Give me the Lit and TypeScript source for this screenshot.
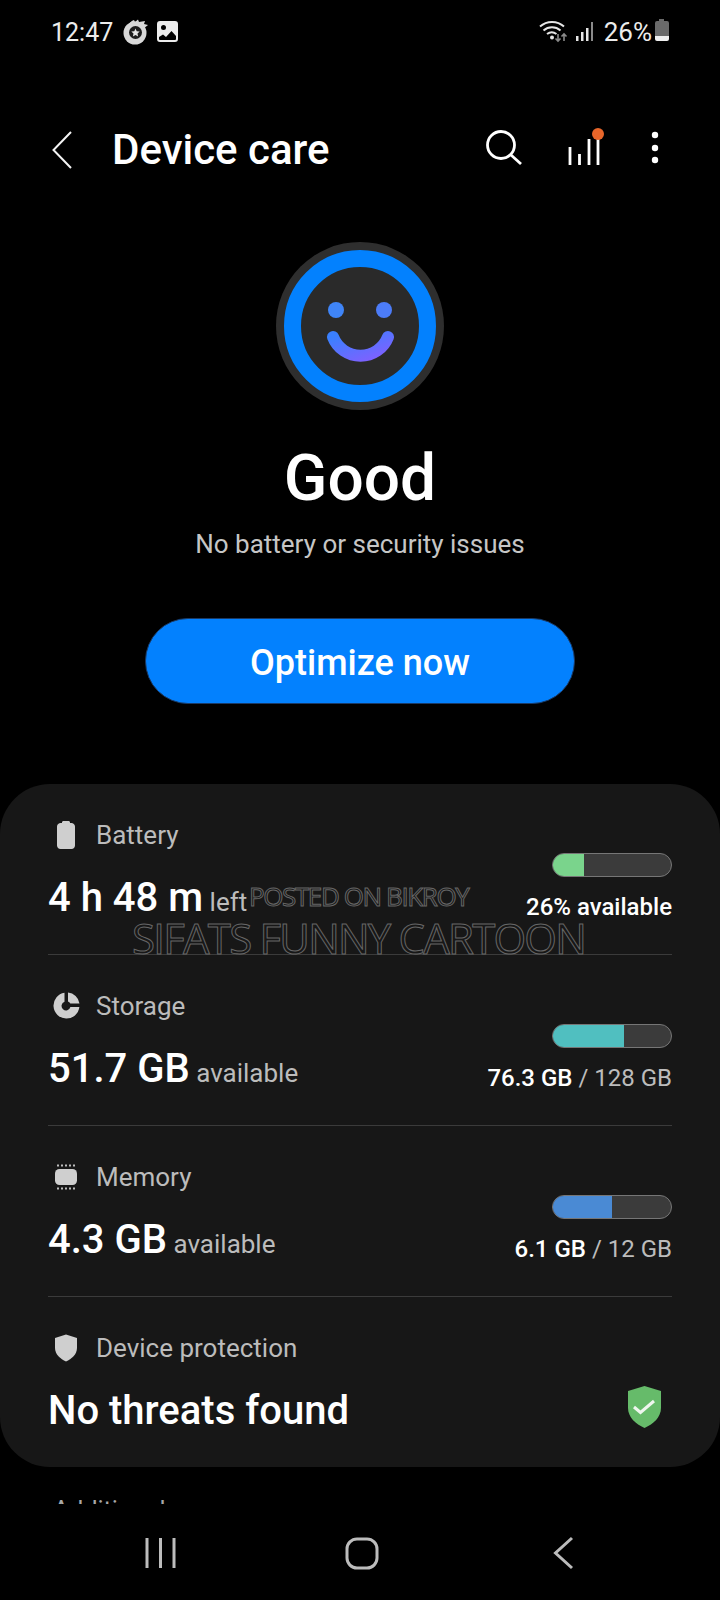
import { LitElement, html, css, svg } from 'lit';
import { customElement } from 'lit/decorators.js';

const rows = [
  {
    label: 'Battery', icon: 'battery', value: '4 h 48 m', unit: 'left',
    pct: 26, color: '#7ad48c', strong: '26% available', rest: '',
  },
  {
    label: 'Storage', icon: 'storage', value: '51.7 GB', unit: 'available',
    pct: 60, color: '#50bfc0', strong: '76.3 GB', rest: ' / 128 GB',
  },
  {
    label: 'Memory', icon: 'memory', value: '4.3 GB', unit: 'available',
    pct: 50, color: '#4a8ad4', strong: '6.1 GB', rest: ' / 12 GB',
  },
];

const rowIcons: Record<string, unknown> = {
  battery: svg`<path d="M10 3.500C10 2.700 10.600 2 11.500 2h5c.9 0 1.500.7 1.500 1.500V4h1.500C21 4 23 5.500 23 7.500v19c0 1.800-1.500 3.500-3.500 3.500h-11C6.500 30 5 28.300 5 26.500v-19C5 5.500 7 4 8.500 4H10z" fill="#cfcfcf"/>`,
  storage: svg`<path d="M12.500 2.700v9a4.500 4.500 0 1 0 5.900 5.400h9A13 13 0 1 1 12.500 2.700z" fill="#cfcfcf"/><path d="M16 2.600A13 13 0 0 1 27.500 13.500H18.300A4.500 4.500 0 0 0 16 11.400z" fill="#cfcfcf"/>`,
  memory: svg`<rect x="3" y="8" width="22" height="16" rx="4.500" fill="#cfcfcf"/><path d="M6 3.500v2M10 3.500v2M14 3.500v2M18 3.500v2M22 3.500v2M6 26.500v2M10 26.500v2M14 26.500v2M18 26.500v2M22 26.500v2" stroke="#cfcfcf" stroke-width="1.800"/>`,
  shield: svg`<path d="M14 2.500 25 6v10c0 6.500-5.500 11-11 13.500C8.500 27 3 22.500 3 16V6z" fill="#cfcfcf"/>`,
};

@customElement('app-root')
export class AppRoot extends LitElement {
  static styles = css`
    :host {
      display: block;
      width: 720px;
      height: 1600px;
      overflow: hidden;
      background: #000;
      font-family: Roboto, "Liberation Sans", sans-serif;
      color: #fff;
    }
    svg { display: block; }

    .status {
      height: 64px;
      padding: 20px 50px 0 51px;
      box-sizing: border-box;
      display: flex;
      align-items: flex-start;
      font-size: 25px;
      line-height: 25px;
      color: #ececec;
    }
    .status .shot { margin: -1px 0 0 9px; }
    .status .pic { margin: 1px 0 0 7px; }
    .status .spacer { flex: 1; }
    .status .signal { margin-top: -1px; }
    .status .level { margin-left: 10px; font-size: 26px; }
    .status .charge { margin: -1px 0 0 2px; }

    .appbar {
      height: 172px;
      display: flex;
      align-items: center;
      padding: 0 60px 0 52px;
    }
    .appbar h1 {
      margin: 0 0 0 40px;
      font-size: 42px;
      font-weight: 500;
      line-height: 50px;
      flex: 1;
    }

    .hero {
      display: flex;
      flex-direction: column;
      align-items: center;
    }
    .face { margin-top: 6px; }
    .hero h2 {
      margin: 31px 0 0;
      font-size: 64px;
      font-weight: 500;
      line-height: 75px;
    }
    .hero p {
      margin: 13px 0 0;
      font-size: 26px;
      line-height: 30px;
      color: #c6c6c6;
    }
    .optimize {
      margin-top: 59px;
      width: 430px;
      height: 86px;
      box-sizing: border-box;
      padding: 4px 0 0;
      border: 1.500px solid #1a3a66;
      border-radius: 43px;
      background: #0381fe;
      color: #fff;
      font: 500 36px Roboto, "Liberation Sans", sans-serif;
    }

    .card {
      position: relative;
      margin-top: 80px;
      height: 683px;
      background: #171717;
      border-radius: 50px;
    }
    .row {
      height: 171px;
      box-sizing: border-box;
      margin: 0 48px;
      display: flex;
      justify-content: space-between;
      border-bottom: 1px solid #3b3b3b;
    }
    .row:last-of-type { border-bottom: 0; height: 170px; }
    .left { padding-top: 33px; }
    .label {
      display: flex;
      align-items: center;
      height: 36px;
      margin-left: 4px;
      gap: 14px;
      font-size: 26px;
      color: #bcbcbc;
    }
    .reading {
      margin-top: 21px;
      font-size: 40px;
      font-weight: 500;
      line-height: 48px;
      white-space: nowrap;
    }
    .reading span {
      font-size: 26px;
      font-weight: 400;
      color: #bcbcbc;
    }
    .right {
      padding-top: 69px;
      display: flex;
      flex-direction: column;
      align-items: flex-end;
    }
    .bar {
      width: 120px;
      height: 24px;
      box-sizing: border-box;
      border: 1px solid #767676;
      border-radius: 12px;
      background: #3b3b3b;
      overflow: hidden;
    }
    .bar div { height: 100%; }
    .usage {
      margin-top: 16px;
      font-size: 24px;
      line-height: 28px;
      color: #bcbcbc;
    }
    .usage b { font-weight: 500; color: #fff; }

    .ok { margin-top: 89px; margin-right: 10px; }

    .wm {
      position: absolute;
      white-space: nowrap;
      color: transparent;
      -webkit-text-stroke: 1px #666;
      font-family: "Open Sans", sans-serif;
      line-height: 1;
    }
    .wm.small { left: 249px; top: 99px; font-size: 26px; letter-spacing: -1.400px; }
    .wm.big { left: 132px; top: 133px; font-size: 42px; letter-spacing: -1.800px; }

    .next {
      margin-top: 31px;
      height: 6px;
      padding-left: 53px;
      overflow: hidden;
      font-size: 25px;
      line-height: 25px;
      color: #a8a8a8;
    }
    .nav {
      position: relative;
      height: 96px;
    }
    .nav svg { position: absolute; left: 0; top: 0; }
  `;

  render() {
    return html`
      <div class="status">
        <span class="time">12:47</span>
        <svg class="shot" width="28" height="26" viewBox="0 0 28 26">
          <path d="M5 9C6 5 9 2 12 1l1 2 3-2.500 1 2.500 6-1-1 3 4 1-5 4z" fill="#d8d8d8"/>
          <circle cx="13" cy="14" r="11.500" fill="#d8d8d8"/>
          <circle cx="13.500" cy="13.500" r="6.500" fill="#1c1c1c"/>
          <path d="m13.500 9.500 1.200 2.800 3 .3-2.200 2 .6 3-2.600-1.500-2.600 1.500.6-3-2.200-2 3-.3z" fill="#e6e6e6"/>
        </svg>
        <svg class="pic" width="21" height="21" viewBox="0 0 21 21">
          <path fill-rule="evenodd" d="M3 0h15a3 3 0 0 1 3 3v15a3 3 0 0 1-3 3H3a3 3 0 0 1-3-3V3a3 3 0 0 1 3-3zM2 16v2a1 1 0 0 0 1 1h15a1 1 0 0 0 1-1v-3l-4.500-5L9 16l-3-2.500zM6.500 4a2.500 2.500 0 1 0 0 5 2.500 2.500 0 0 0 0-5z" fill="#ececec"/>
        </svg>
        <span class="spacer"></span>
        <svg class="signal" width="55" height="24" viewBox="0 0 55 24">
          <g fill="none" stroke="#e6e6e6" stroke-width="2">
            <path d="M1 7.500a18 18 0 0 1 24 0"/>
            <path d="M4.500 11.500a13 13 0 0 1 17 0"/>
            <path d="M8 15a8 8 0 0 1 9.500 0"/>
          </g>
          <circle cx="13" cy="18.500" r="2" fill="#e6e6e6"/>
          <path d="M19 15v7m-2.500-2.500L19 22l2.500-2.500M25 22v-7m-2.500 2.500L25 15l2.500 2.500" fill="none" stroke="#8a8a8a" stroke-width="1.600"/>
          <path d="M37 17h2.500v5H37zM42 13h2.500v9H42zM47 9h2.500v13H47z" fill="#e6e6e6"/>
          <path d="M52 3h2v19h-2z" fill="#8a8a8a"/>
        </svg>
        <span class="level">26%</span>
        <svg class="charge" width="16" height="22" viewBox="0 0 16 22">
          <path d="M5 0h5v2h3a2 2 0 0 1 2 2v13H1V4a2 2 0 0 1 2-2h2z" fill="#6a6a6a"/>
          <path d="M1 17h14v3a2 2 0 0 1-2 2H3a2 2 0 0 1-2-2z" fill="#f0f0f0"/>
        </svg>
      </div>

      <div class="appbar">
        <svg width="20" height="38" viewBox="0 0 20 38">
          <path d="M19 1 1.500 19 19 37" fill="none" stroke="#f4f4f4" stroke-width="2"/>
        </svg>
        <h1>Device care</h1>
        <svg width="180" height="50" viewBox="0 0 180 50">
          <circle cx="21" cy="20" r="13.500" fill="none" stroke="#fff" stroke-width="2.800"/>
          <path d="m31 30 10 9" stroke="#fff" stroke-width="2.800"/>
          <path d="M90 40V22M99.500 40V29M109 40V14M118 40V14" stroke="#fff" stroke-width="2.800"/>
          <circle cx="118" cy="9" r="6" fill="#e8662a"/>
          <circle cx="175" cy="10" r="3.200" fill="#fff"/>
          <circle cx="175" cy="23" r="3.200" fill="#fff"/>
          <circle cx="175" cy="35" r="3.200" fill="#fff"/>
        </svg>
      </div>

      <div class="hero">
        <svg class="face" width="168" height="168" viewBox="0 0 168 168">
          <defs>
            <linearGradient id="smile" x1="0" y1="0" x2="1" y2="1">
              <stop offset="0" stop-color="#3a80ff"/>
              <stop offset="1" stop-color="#8060ff"/>
            </linearGradient>
          </defs>
          <circle cx="84" cy="84" r="84" fill="#2e2e2e"/>
          <circle cx="84" cy="84" r="67.500" fill="#2a2a2a" stroke="#0381fe" stroke-width="17"/>
          <circle cx="60" cy="68" r="8" fill="#3f85f8"/>
          <circle cx="108" cy="68" r="8" fill="#4c7cf8"/>
          <path d="M57 95a29.500 29.500 0 0 0 55 0" fill="none" stroke="url(#smile)" stroke-width="12" stroke-linecap="round"/>
        </svg>
        <h2>Good</h2>
        <p>No battery or security issues</p>
        <button class="optimize">Optimize now</button>
      </div>

      <div class="card">
        ${rows.map((r) => html`
          <div class="row">
            <div class="left">
              <div class="label">
                <svg width="30" height="32" viewBox="0 0 30 32">${rowIcons[r.icon]}</svg>
                ${r.label}
              </div>
              <div class="reading">${r.value}<span> ${r.unit}</span></div>
            </div>
            <div class="right">
              <div class="bar"><div style="width:${r.pct}%;background:${r.color}"></div></div>
              <div class="usage"><b>${r.strong}</b>${r.rest}</div>
            </div>
          </div>
        `)}
        <div class="row">
          <div class="left">
            <div class="label">
              <svg width="30" height="32" viewBox="0 0 30 32">${rowIcons.shield}</svg>
              Device protection
            </div>
            <div class="reading">No threats found</div>
          </div>
          <svg class="ok" width="35" height="42" viewBox="0 0 35 42">
            <path d="M17.500 0 34 5v17c0 9-7.500 16-16.500 20C8.500 38 1 31 1 22V5z" fill="#66bb6a"/>
            <path d="m7 21 6.500 5.500L27 15" fill="none" stroke="#eef6ee" stroke-width="3"/>
          </svg>
        </div>
        <span class="wm small">POSTED ON BIKROY</span>
        <span class="wm big">SIFATS FUNNY CARTOON</span>
      </div>

      <div class="next">Additional care</div>

      <div class="nav">
        <svg width="720" height="96" viewBox="0 0 720 96">
          <g fill="none" stroke="#bcbcbc" stroke-width="3">
            <path d="M147 34v30M160.500 34v30M174 34v30"/>
            <rect x="347" y="35" width="30" height="29" rx="10"/>
            <path d="M572 34 555.500 49 572 64"/>
          </g>
        </svg>
      </div>
    `;
  }
}
